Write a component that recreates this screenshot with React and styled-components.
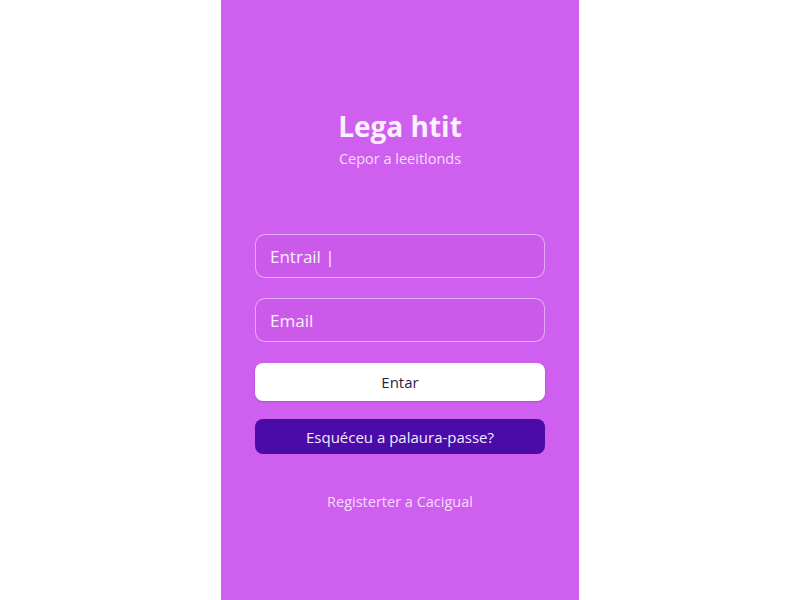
import React from "react"
import styled, { createGlobalStyle } from 'styled-components'

const GlobalStyle = createGlobalStyle`
  html, body {
    margin: 0;
    padding: 0;
    background: #ffffff;
    font-family: "Open Sans", "Noto Sans", sans-serif;
  }
`

const Page = styled.div`
  display: flex;
  justify-content: center;
  height: 600px;
`

const Panel = styled.div`
  width: 358px;
  height: 600px;
  box-sizing: border-box;
  padding: 109px 34px 0;
  background: #cf5fee;
  display: flex;
  flex-direction: column;
`

const Title = styled.h1`
  margin: 0;
  font-size: 28px;
  line-height: 34px;
  font-weight: 700;
  color: #fbf0ff;
  text-align: center;
`

const Subtitle = styled.p`
  margin: 6px 0 0;
  font-size: 14.5px;
  line-height: 20px;
  color: #f6dcff;
  text-align: center;
`

const Form = styled.form`
  margin-top: 65px;
  display: flex;
  flex-direction: column;
`

const Field = styled.div`
  height: 44px;
  box-sizing: border-box;
  border: 1px solid rgba(255, 235, 255, 0.55);
  border-radius: 10px;
  background: #cb5aea;
  padding: 0 14px;
  display: flex;
  align-items: center;
  margin-bottom: ${p => p.$gap || 0}px;
  font-size: 17px;
  color: #fbeeff;
`

const Button = styled.button`
  height: ${p => p.$h}px;
  border: none;
  border-radius: 8px;
  font-family: inherit;
  font-size: 15px;
  background: ${p => p.$dark ? '#4b0ba8' : '#ffffff'};
  color: ${p => p.$dark ? '#f3eaff' : '#2b1f45'};
  margin-top: ${p => p.$top}px;
  box-shadow: ${p => p.$dark ? 'none' : '0 1px 2px rgba(90, 20, 120, 0.25)'};
`

const Register = styled.a`
  margin-top: 38px;
  font-size: 14.5px;
  line-height: 20px;
  color: #f7dcff;
  text-align: center;
  text-decoration: none;
`

export default function App() {
  return (
    <>
      <GlobalStyle />
      <Page>
        <Panel>
          <Title>Lega htit</Title>
          <Subtitle>Cepor a leeitlonds</Subtitle>
          <Form onSubmit={e => e.preventDefault()}>
            <Field $gap={20}>Entrail |</Field>
            <Field>Email</Field>
            <Button type="button" $h={38} $top={21}>Entar</Button>
            <Button type="button" $h={35} $top={18} $dark>Esquéceu a palaura-passe?</Button>
          </Form>
          <Register href="#">Registerter a Cacigual</Register>
        </Panel>
      </Page>
    </>
  )
}
